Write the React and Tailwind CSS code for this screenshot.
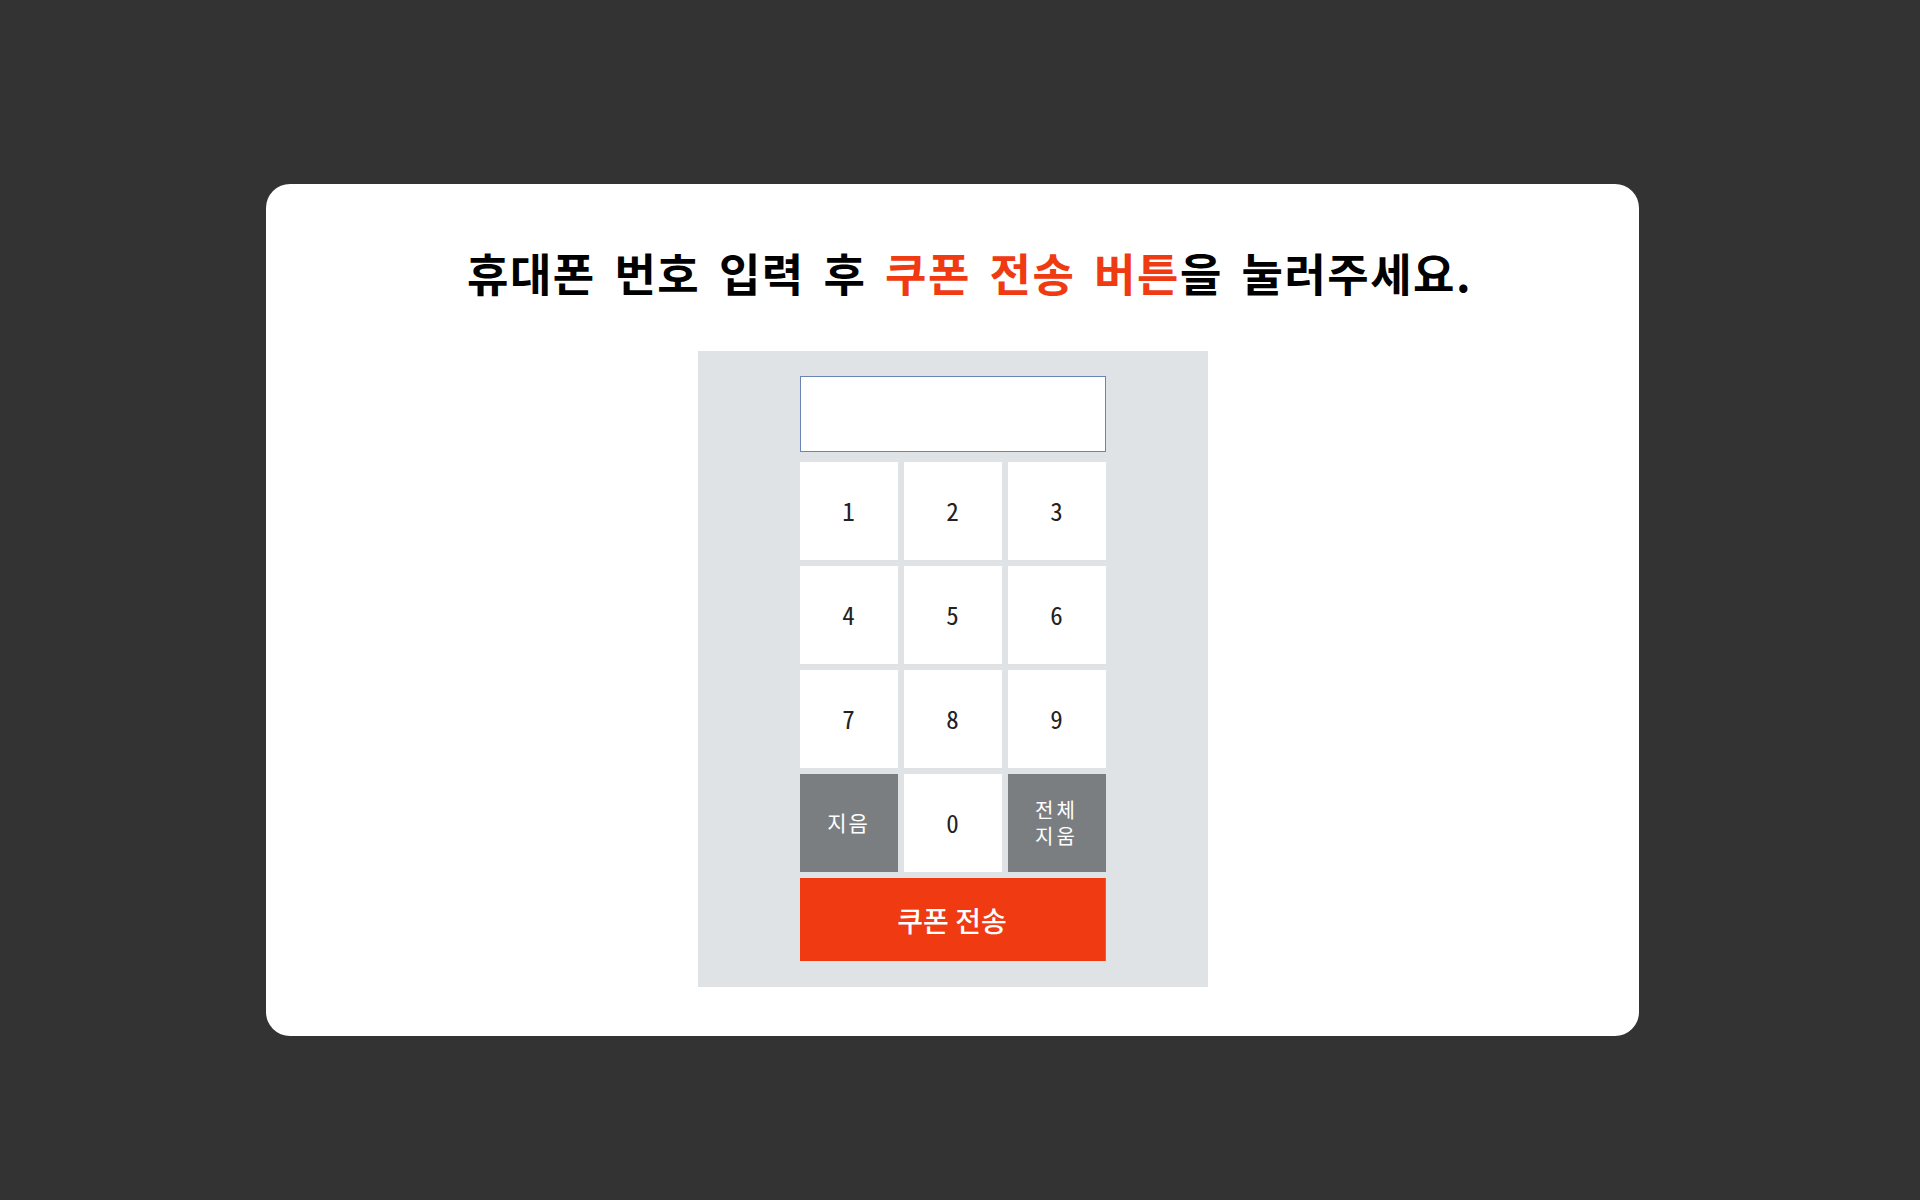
import React, { useState } from 'react';

const keys = ['1', '2', '3', '4', '5', '6', '7', '8', '9'];

const App = () => {
    const [phone, setPhone] = useState('');

    const press = (k) => setPhone((p) => (p + k).slice(0, 11));

    return (
        <div className="min-h-[1200px] w-full bg-[#333333] pt-[184px] font-['Noto_Sans_CJK_KR','Noto_Sans',sans-serif]">
            <div className="ml-[266px] w-[1373px] h-[852px] bg-white rounded-3xl flex flex-col">
                {/* title */}
                <h1 className="mt-[57px] pl-[201px] text-[45px] leading-[64px] font-bold text-black whitespace-nowrap tracking-[1.5px] [word-spacing:7px]">
                    휴대폰 번호 입력 후 <span className="text-[#ef3a12]">쿠폰 전송 버튼</span>을 눌러주세요.
                </h1>

                {/* keypad panel */}
                <div className="mt-[46px] mx-auto w-[510px] h-[636px] bg-[#e0e3e6] pt-[25px] flex flex-col items-center">
                    <input
                        value={phone}
                        readOnly
                        className="w-[306px] h-[76px] bg-white border border-[#6b84b8] text-center text-[28px] outline-none"
                    />
                    <div className="mt-[10px] w-[306px] grid grid-cols-3 gap-[6px] font-['Noto_Sans_Mono_CJK_KR','Noto_Sans_CJK_KR',monospace]">
                        {keys.map((k) => (
                            <button
                                key={k}
                                onClick={() => press(k)}
                                className="h-[98px] bg-white text-[25px] font-medium text-[#222222] flex items-center justify-center"
                            >
                                {k}
                            </button>
                        ))}
                        <button
                            onClick={() => setPhone((p) => p.slice(0, -1))}
                            className="h-[98px] bg-[#7b7e81] text-[21px] font-medium text-white tracking-[2px] flex items-center justify-center"
                        >
                            지음
                        </button>
                        <button
                            onClick={() => press('0')}
                            className="h-[98px] bg-white text-[25px] font-medium text-[#222222] flex items-center justify-center"
                        >
                            0
                        </button>
                        <button
                            onClick={() => setPhone('')}
                            className="h-[98px] bg-[#7b7e81] text-[20px] font-medium leading-[26px] text-white tracking-[3px] flex flex-col items-center justify-center"
                        >
                            <span className="block">전체</span>
                            <span className="block">지움</span>
                        </button>
                    </div>
                    <button className="mt-[6px] w-[306px] h-[83px] bg-[#ef3a12] border-r border-[#6b84b8] text-white text-[28px] font-medium flex items-center justify-center">
                        쿠폰 전송
                    </button>
                </div>
            </div>
        </div>
    );
};

export default App;
